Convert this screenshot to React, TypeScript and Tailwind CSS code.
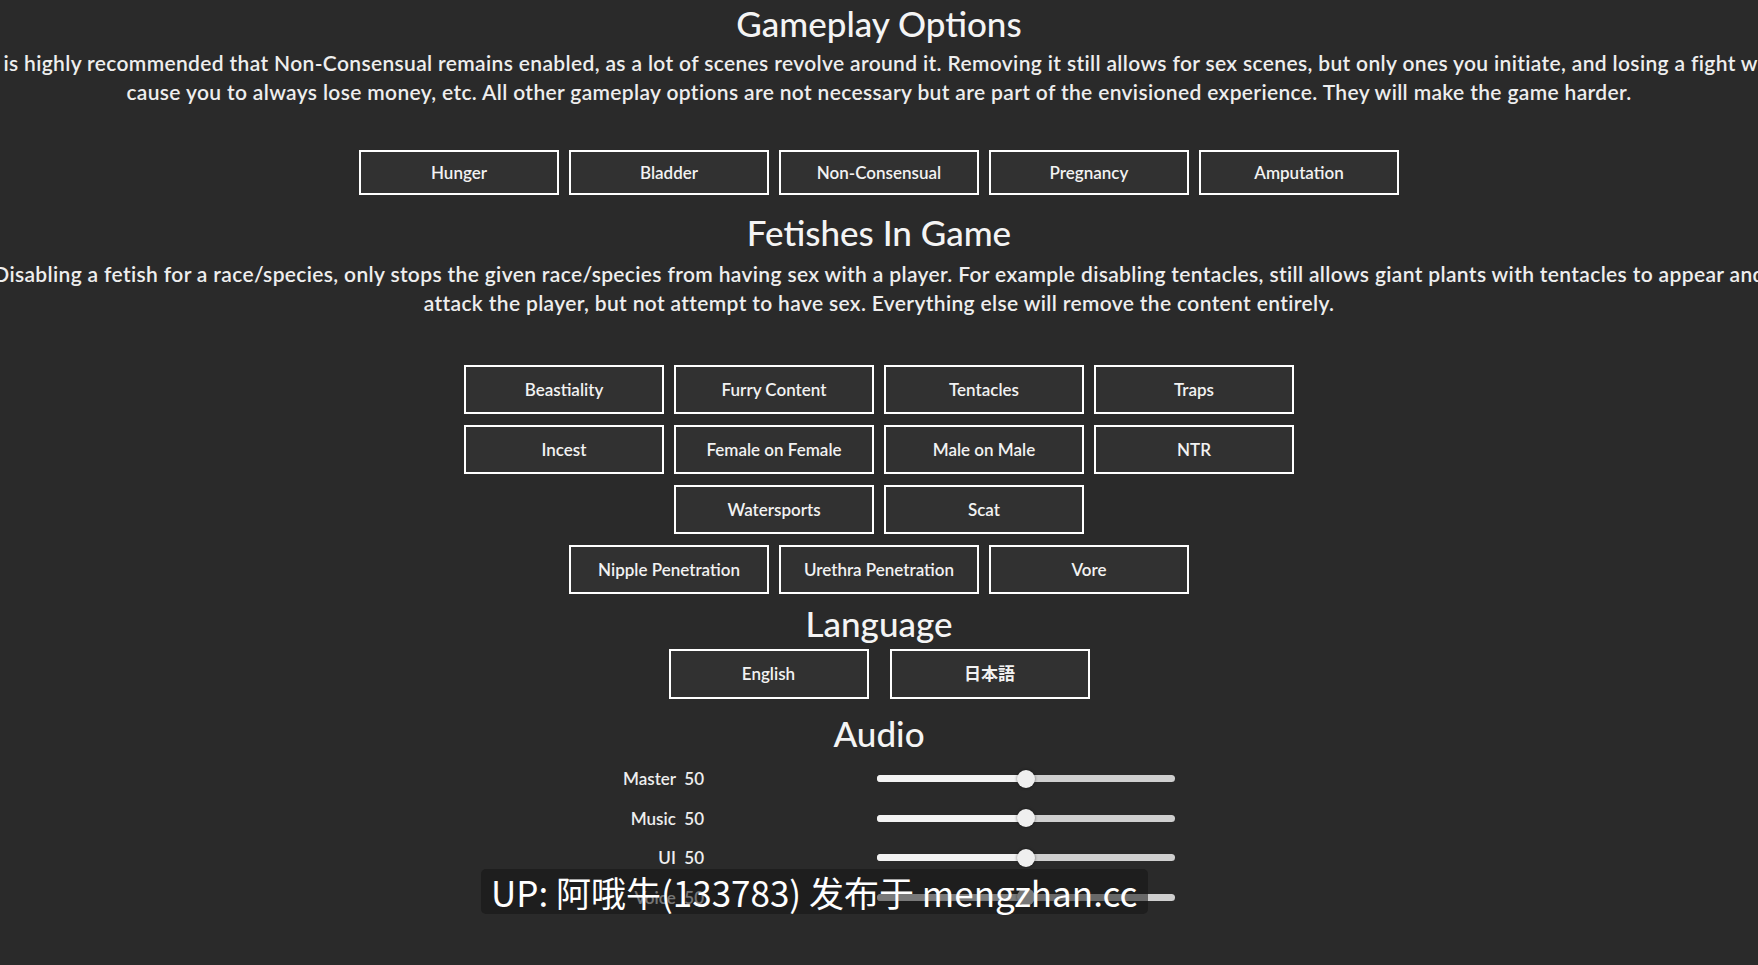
import { useState } from "react";

const gameplay = ["Hunger", "Bladder", "Non-Consensual", "Pregnancy", "Amputation"];

const fetishRows = [
  ["Beastiality", "Furry Content", "Tentacles", "Traps"],
  ["Incest", "Female on Female", "Male on Male", "NTR"],
  ["Watersports", "Scat"],
  ["Nipple Penetration", "Urethra Penetration", "Vore"],
];

const audio = [
  { name: "Master", value: 50 },
  { name: "Music", value: 50 },
  { name: "UI", value: 50 },
  { name: "Voice", value: 50 },
];

function Toggle({ label, h = "h-[49px]" }: { label: string; h?: string }) {
  return (
    <button
      className={`w-[200px] ${h} border-2 border-white bg-[#313131] text-[17px] font-semibold text-[#f2f2f2]`}
    >
      {label}
    </button>
  );
}

function Heading({ children, className = "" }: { children: string; className?: string }) {
  return <h2 className={`text-center text-[35px] leading-[40px] font-medium text-[#f4f4f4] ${className}`}>{children}</h2>;
}

function Blurb({ lines, className = "" }: { lines: string[]; className?: string }) {
  return (
    <div className={`flex flex-col items-center text-[21px] leading-[29px] tracking-[0.35px] font-semibold text-[#eeeeee] ${className}`}>
      {lines.map((l) => (
        <p key={l} className="whitespace-nowrap">
          {l}
        </p>
      ))}
    </div>
  );
}

function Slider({ value }: { value: number }) {
  return (
    <div className="relative h-[18px] w-[298px] flex items-center">
      <div className="h-[7px] w-full rounded-full bg-[#cfcfcf] overflow-hidden">
        <div className="h-full bg-[#f3f3f3]" style={{ width: `${value}%` }} />
      </div>
      <div
        className="absolute top-0 h-[18px] w-[18px] -translate-x-1/2 rounded-full bg-[#efefef] shadow-[0_0_3px_rgba(0,0,0,0.5)]"
        style={{ left: `${value}%` }}
      />
    </div>
  );
}

export default function App() {
  const [vol] = useState(audio);
  return (
    <div
      className="relative h-[965px] w-full overflow-hidden bg-[#2a2a2a] text-white"
      style={{ fontFamily: "Lato, 'Noto Sans CJK JP', sans-serif" }}
    >
      <Heading className="pt-[3px]">Gameplay Options</Heading>
      <Blurb
        className="mt-[5px]"
        lines={[
          "It is highly recommended that Non-Consensual remains enabled, as a lot of scenes revolve around it. Removing it still allows for sex scenes, but only ones you initiate, and losing a fight will",
          "cause you to always lose money, etc. All other gameplay options are not necessary but are part of the envisioned experience. They will make the game harder.",
        ]}
      />

      <div className="mt-[44px] flex justify-center gap-[10px]">
        {gameplay.map((g) => (
          <Toggle key={g} label={g} h="h-[45px]" />
        ))}
      </div>

      <Heading className="mt-[17px]">Fetishes In Game</Heading>
      <Blurb
        className="mt-[7px]"
        lines={[
          "Disabling a fetish for a race/species, only stops the given race/species from having sex with a player. For example disabling tentacles, still allows giant plants with tentacles to appear and",
          "attack the player, but not attempt to have sex. Everything else will remove the content entirely.",
        ]}
      />

      <div className="mt-[48px] flex flex-col items-center gap-[11px]">
        {fetishRows.map((row, i) => (
          <div key={i} className="flex justify-center gap-[10px]">
            {row.map((f) => (
              <Toggle key={f} label={f} />
            ))}
          </div>
        ))}
      </div>

      <Heading className="mt-[9px]">Language</Heading>
      <div className="mt-[6px] flex justify-center gap-[21px]">
        <Toggle label="English" h="h-[50px]" />
        <Toggle label="日本語" h="h-[50px]" />
      </div>

      <Heading className="mt-[14px]">Audio</Heading>
      <div className="mt-[13px] flex justify-center">
        <div className="flex w-[592px] flex-col gap-[14px]">
          {vol.map((a) => (
            <div key={a.name} className="flex items-center">
              <div className="w-[121px] text-right text-[17px] font-semibold text-[#eeeeee] whitespace-nowrap">
                {a.name}&nbsp;&nbsp;{a.value}
              </div>
              <div className="w-[173px]" />
              <Slider value={a.value} />
            </div>
          ))}
        </div>
      </div>

      {/* uploader watermark */}
      <div className="absolute left-[481px] top-[869px] flex h-[45px] w-[667px] items-center rounded-[5px] bg-[#141414]/55 pl-[10px]">
        <span
          className="whitespace-nowrap text-[35px] leading-none text-white"
          style={{ fontFamily: "'Noto Sans CJK SC', sans-serif" }}
        >
          UP: 阿哦牛(133783) 发布于 mengzhan.cc
        </span>
      </div>
    </div>
  );
}
